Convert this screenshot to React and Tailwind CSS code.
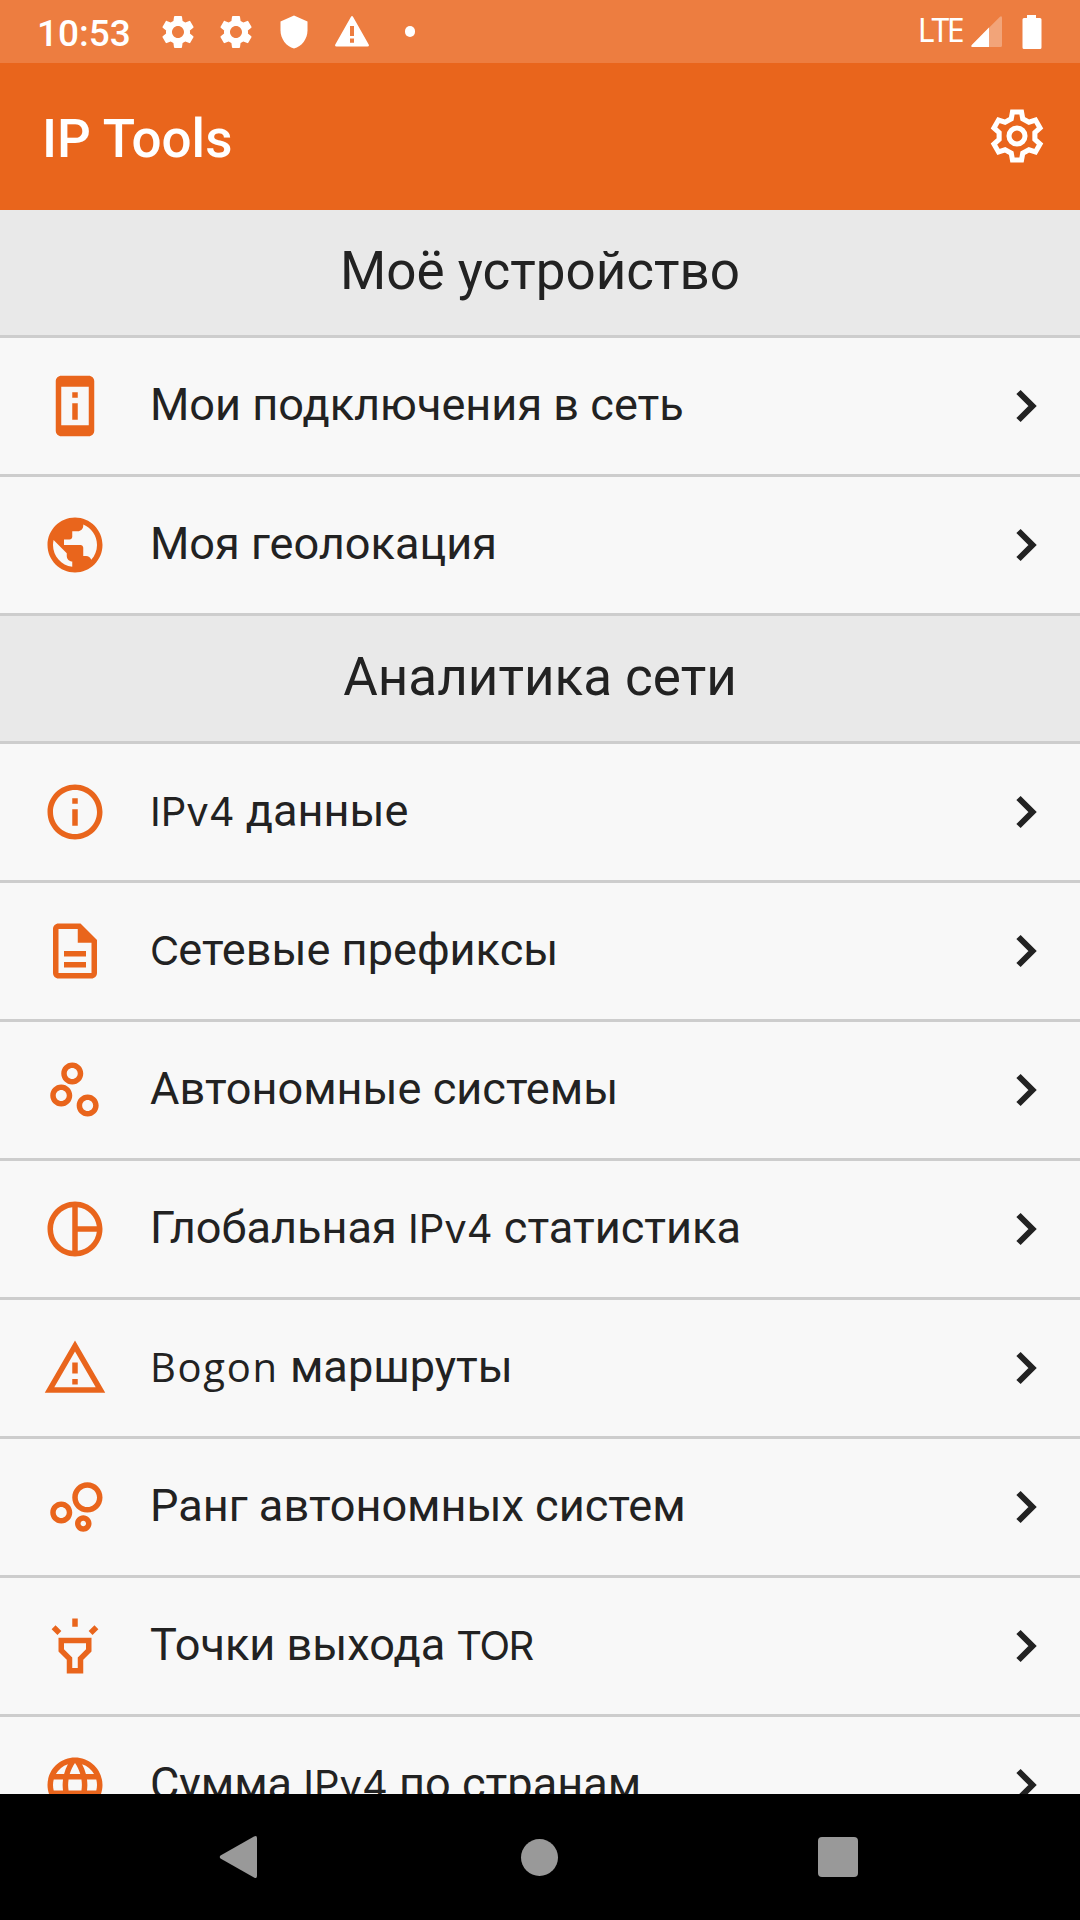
import {
  MdPermDeviceInformation, MdPublic, MdInfoOutline, MdOutlineDescription,
  MdOutlineScatterPlot, MdOutlinePieChart, MdOutlineBubbleChart,
  MdOutlineHighlight, MdLanguage, MdSettings, MdShield
} from "react-icons/md";

const sections = [
  {
    title: "Моё устройство",
    items: [
      { icon: MdPermDeviceInformation, label: ["Мои подключения в сеть"] },
      { icon: MdPublic, label: ["Моя геолокация"] }
    ]
  },
  {
    title: "Аналитика сети",
    items: [
      { icon: MdInfoOutline, label: [{ latin: "IPv4", style: "font-[Inter]" }, " данные"] },
      { icon: MdOutlineDescription, label: [{ latin: "C", style: "font-[Inter] tracking-[-1px]" }, "етевые префиксы"] },
      { icon: MdOutlineScatterPlot, label: ["Автономные системы"] },
      { icon: MdOutlinePieChart, label: ["Глобальная ", { latin: "IPv4", style: "font-[Inter]" }, " статистика"] },
      { icon: WarningIcon, label: [{ latin: "Bogon", style: "font-['Open_Sans'] tracking-[1.7px]" }, " маршруты"] },
      { icon: MdOutlineBubbleChart, label: ["Ранг автономных систем"] },
      { icon: MdOutlineHighlight, label: ["Точки выхода ", { latin: "TOR", style: "font-[Inter] tracking-[-1.5px]" }] },
      { icon: MdLanguage, label: ["Сумма ", { latin: "IPv4", style: "font-[Inter]" }, " по странам"] }
    ]
  }
]

function WarningIcon({ className }) {
  return (
    <svg className={className} viewBox="0 0 24 24" fill="currentColor">
      <path d="M12 5.990L19.530 19H4.470L12 5.990M12 2L1 21h22L12 2zM13 16h-2v2h2v-2zM13 10h-2v4h2v-4z" />
    </svg>
  )
}

function StatusBar() {
  return (
    <div className="flex h-[63px] shrink-0 items-center justify-between bg-[#ed7d40] pl-[37px] pr-[38px] text-white">
      <div className="flex items-center">
        <span className="w-[96px] whitespace-nowrap text-[37px] leading-[60px] font-medium pt-[4px]">10:53</span>
        <div className="ml-[16px] flex items-center">
          <div className="flex w-[58px] justify-center"><MdSettings className="size-[40px]" /></div>
          <div className="flex w-[58px] justify-center"><MdSettings className="size-[40px]" /></div>
          <div className="flex w-[58px] justify-center"><MdShield className="size-[36px]" /></div>
          <div className="flex w-[58px] justify-center">
            <svg className="h-[31px] w-[34px]" viewBox="0 0 34 31" fill="#fff" fillRule="evenodd">
              <path d="M16 .8Q17 -.6 18 .8L33.700 28.500Q34.500 30.500 32.500 30.500H1.500Q-.5 30.500 .3 28.500ZM15 10V20H19V10ZM15 22.500V26.700H19V22.500Z" />
            </svg>
          </div>
          <div className="flex w-[58px] justify-center"><span className="size-[10.5px] rounded-full bg-white" /></div>
        </div>
      </div>
      <div className="flex items-center">
        <span className="font-['Noto_Sans'] text-[32px] leading-[60px] tracking-[-2.500px] pb-[3px]">LTE</span>
        <svg className="ml-[9px] size-[32px]" viewBox="0 0 32 32" fill="#fff">
          <path d="M1.500 31Q-.5 31 .8 29L29 .8Q31 -.5 31 2V29.500Q31 31 29.500 31Z" opacity=".3" />
          <path d="M1.500 31Q-.5 31 .8 29L18 11.500V31Z" />
        </svg>
        <svg className="ml-[19px] h-[34px] w-[20px]" viewBox="0 0 20 34" fill="#fff">
          <path d="M5 0H14V3H18Q19.500 3 19.500 4.500V32.500Q19.500 34 18 34H2Q.5 34 .5 32.500V4.500Q.5 3 2 3H5Z" />
        </svg>
      </div>
    </div>
  )
}

function SettingsIcon() {
  return (
    <svg className="mb-[2px] size-[64px]" viewBox="-12 -12 24 24" fill="none" stroke="#fff" strokeWidth="1.9">
      <path d="M-1.700 -9H1.700L2.150 -6.450L4.480 -5.150L6.940 -5.970L8.640 -3.030L6.700 -1.300V1.300L8.640 3.030L6.940 5.970L4.480 5.150L2.150 6.450L1.700 9H-1.700L-2.150 6.450L-4.480 5.150L-6.940 5.970L-8.640 3.030L-6.700 1.300V-1.300L-8.640 -3.030L-6.940 -5.970L-4.480 -5.150L-2.150 -6.450Z" />
      <circle r="3" />
    </svg>
  )
}

function Row({ icon: Icon, label }) {
  return (
    <div className="flex h-[139px] shrink-0 items-center border-b-3 border-[#cdcdcd] bg-[#f8f8f8] pl-[42px] pr-[21px]">
      <Icon className="size-[66px] text-[#e9651c]" />
      <div className="ml-[42px] flex-1 whitespace-pre text-[45.1px] leading-[60px] pb-[2px]">
        {label.map((part, idx) => part.latin ? (
          <span key={idx} className={`text-[40px] ${part.style}`}>{part.latin}</span>
        ) : part)}
      </div>
      <svg className="size-[66px]" viewBox="0 0 66 66" fill="none" stroke="#222" strokeWidth="6">
        <path d="M25.500 19L39.500 33L25.500 47" />
      </svg>
    </div>
  )
}

export default function App() {
  return (
    <div className="flex h-[1920px] w-[1080px] flex-col overflow-hidden bg-[#f8f8f8] font-[Roboto,sans-serif] text-[#222]">
      <StatusBar />
      <div className="flex h-[147px] shrink-0 items-center justify-between bg-[#e9651c] pl-[42px] pr-[31px] text-white">
        <h1 className="text-[53px] leading-[60px] font-medium pt-[4px]">IP Tools</h1>
        <SettingsIcon />
      </div>
      <div className="flex min-h-0 flex-1 flex-col overflow-hidden">
        {sections.map((section) => (
          <div key={section.title} className="shrink-0">
            <h2 className="h-[128px] border-b-3 border-[#cdcdcd] bg-[#e9e9e9] text-center text-[53px] leading-[123px]">{section.title}</h2>
            {section.items.map((item, idx) => <Row key={idx} {...item} />)}
          </div>
        ))}
      </div>
      <div className="flex h-[126px] shrink-0 items-center bg-black pl-[219px]">
        <svg className="h-[42px] w-[38px]" viewBox="0 0 38 42" fill="#999">
          <path d="M35 .5Q38 -1 38 2V40Q38 43 35 41.500L1.500 22.500Q0 21 1.500 19.500Z" />
        </svg>
        <span className="ml-[264px] size-[37px] rounded-full bg-[#999]" />
        <span className="ml-[260px] size-[40px] rounded-[4px] bg-[#999]" />
      </div>
    </div>
  )
}
